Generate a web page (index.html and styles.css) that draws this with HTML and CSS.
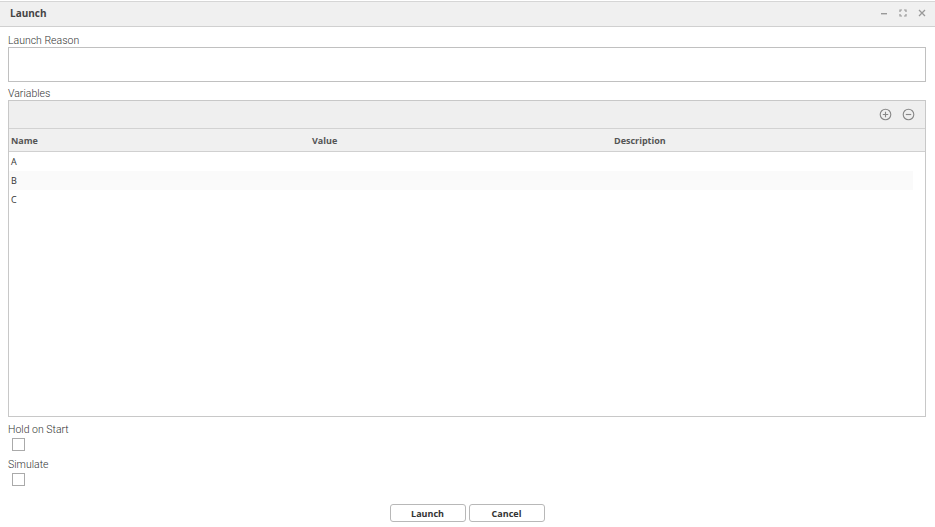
FILE: index.html
```html
<!DOCTYPE html>
<html lang="en">
<head>
  <meta charset="UTF-8">
  <title>Launch</title>
  <link rel="stylesheet" href="styles.css">
</head>
<body>
  <div class="window">
    <header class="titlebar">
      <h1>Launch</h1>
      <div class="win-tools">
        <svg width="10" height="10" viewBox="0 0 10 10"><rect x="2" y="5" width="6" height="1.4" fill="#999"/></svg>
        <svg width="10" height="10" viewBox="0 0 10 10" fill="none" stroke="#999" stroke-width="1.2">
          <path d="M2 4V2h2M6 2h2v2M8 6v2H6M4 8H2V6"/>
        </svg>
        <svg width="10" height="10" viewBox="0 0 10 10" fill="none" stroke="#999" stroke-width="1.3">
          <path d="M2 2l6 6M8 2l-6 6"/>
        </svg>
      </div>
    </header>

    <main class="content">
      <label class="field-label">Launch Reason</label>
      <textarea class="reason"></textarea>

      <label class="field-label">Variables</label>
      <div class="grid">
        <div class="grid-toolbar">
          <svg width="13" height="13" viewBox="0 0 13 13" fill="none" stroke="#888" stroke-width="1.1">
            <circle cx="6.5" cy="6.5" r="5.3"/>
            <path d="M6.5 3.8v5.4M3.8 6.5h5.4"/>
          </svg>
          <svg width="13" height="13" viewBox="0 0 13 13" fill="none" stroke="#888" stroke-width="1.1">
            <circle cx="6.5" cy="6.5" r="5.3"/>
            <path d="M3.8 6.5h5.4"/>
          </svg>
        </div>
        <div class="grid-head">
          <span>Name</span>
          <span>Value</span>
          <span>Description</span>
        </div>
        <div class="grid-body">
          <div class="row"><span>A</span><span></span><span></span></div>
          <div class="row alt"><span>B</span><span></span><span></span></div>
          <div class="row"><span>C</span><span></span><span></span></div>
        </div>
      </div>

      <label class="field-label">Hold on Start</label>
      <input type="checkbox" class="check">
      <label class="field-label">Simulate</label>
      <input type="checkbox" class="check">

      <div class="actions">
        <button>Launch</button>
        <button>Cancel</button>
      </div>
    </main>
  </div>
</body>
</html>
```

FILE: styles.css
```css
body {
  margin: 0;
  padding: 0;
  background-color: white;
  font-family: Roboto, "Liberation Sans", sans-serif;
  color: #333;
}

.window {
  padding-top: 1px;
}

.titlebar {
  height: 24px;
  box-sizing: content-box;
  background-color: #f0f0f0;
  border-top: 1px solid #d6d6d6;
  border-bottom: 1px solid #d0d0d0;
  display: flex;
  justify-content: space-between;
  align-items: center;
  padding: 0 8px 0 10px;
}

.titlebar h1 {
  margin: 0 0 2px 0;
  font-family: "Open Sans", sans-serif;
  font-size: 10px;
  font-weight: bold;
  color: #444;
}

.win-tools {
  display: flex;
  gap: 9px;
  margin-bottom: 2px;
}

.content {
  padding: 6px 9px 0 8px;
  display: flex;
  flex-direction: column;
}

.field-label {
  font-size: 10.5px;
  font-weight: 300;
  line-height: 14px;
  padding-top: 1px;
  height: 13px;
  color: #333;
}

.reason {
  height: 35px;
  box-sizing: border-box;
  border: 1px solid #c0c0c0;
  margin: 0 0 4px 0;
  resize: none;
  padding: 0;
}

.grid {
  height: 317px;
  box-sizing: border-box;
  border: 1px solid #c8c8c8;
  margin-bottom: 5px;
  font-family: "Open Sans", sans-serif;
  font-size: 9px;
}

.grid-toolbar {
  height: 28px;
  box-sizing: border-box;
  background-color: #efefef;
  border-bottom: 1px solid #d2d2d2;
  display: flex;
  justify-content: flex-end;
  align-items: center;
  gap: 10px;
  padding-right: 10px;
}

.grid-head,
.row {
  display: grid;
  grid-template-columns: 301px 302px 1fr;
  padding-left: 2px;
}

.grid-head {
  height: 23px;
  box-sizing: border-box;
  background-color: #f0f0f0;
  border-bottom: 1px solid #d0d0d0;
  align-items: center;
  font-weight: bold;
  color: #555;
}

.grid-body {
  margin-right: 12px;
}

.row {
  height: 19px;
  align-items: center;
  color: #333;
}

.row.alt {
  background-color: #fafafa;
}

.check {
  appearance: none;
  width: 13px;
  height: 13px;
  border: 1px solid #aaa;
  margin: 2px 0 6px 4px;
  background: white;
}

.actions {
  display: flex;
  justify-content: center;
  gap: 3px;
  margin-top: 12px;
}

.actions button {
  width: 76px;
  height: 18px;
  background-color: white;
  border: 1px solid #b8b8b8;
  border-radius: 3px;
  font-family: "Open Sans", sans-serif;
  font-size: 9px;
  font-weight: bold;
  color: #333;
  padding: 0;
  cursor: pointer;
}
```
